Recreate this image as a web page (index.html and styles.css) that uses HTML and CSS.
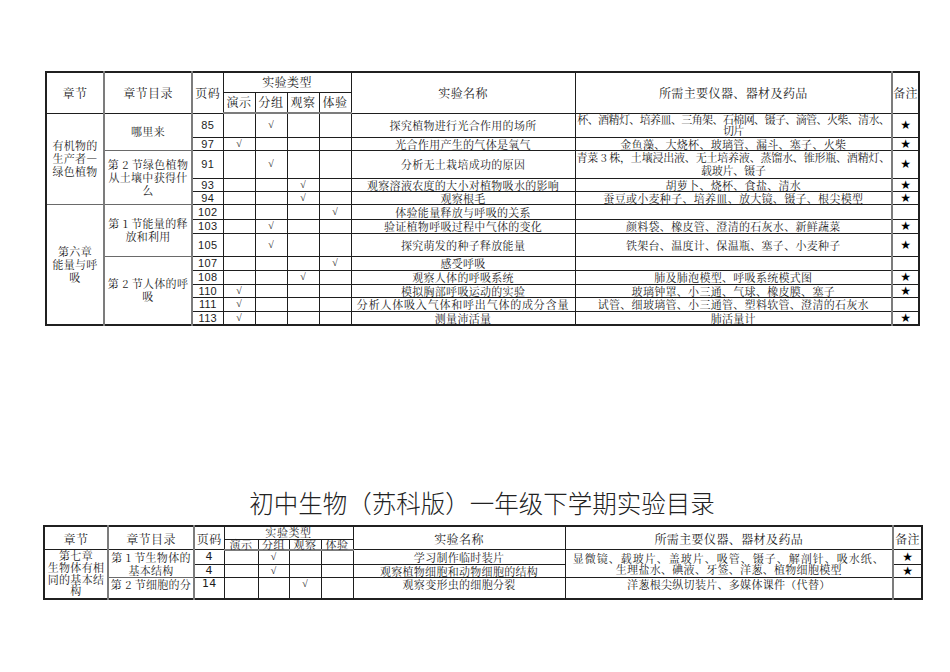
FILE: index.html
```html
<!DOCTYPE html>
<html lang="zh-CN">
<head>
<meta charset="utf-8">
<title>初中生物实验目录</title>
<link rel="stylesheet" href="styles.css">
</head>
<body>
<div class="page">
  <table class="grid t1">
    <colgroup>
      <col class="w58"><col class="w88"><col class="w31"><col class="w32"><col class="w32"><col class="w32"><col class="w32"><col class="w224"><col class="w317"><col class="w27">
    </colgroup>
    <tr class="h20">
      <th rowspan="2" class="gr">章节</th>
      <th rowspan="2" class="gr">章节目录</th>
      <th rowspan="2">页码</th>
      <th colspan="4">实验类型</th>
      <th rowspan="2">实验名称</th>
      <th rowspan="2" class="gr">所需主要仪器、器材及药品</th>
      <th rowspan="2">备注</th>
    </tr>
    <tr class="h21 hb">
      <th>演示</th><th>分组</th><th>观察</th><th>体验</th>
    </tr>
    <tr class="h24">
      <td rowspan="5" class="gr side">有机物的<br>生产者—<br>绿色植物</td>
      <td rowspan="2" class="gr side">哪里来</td>
      <td class="num">85</td><td></td><td class="ck">√</td><td></td><td></td>
      <td>探究植物进行光合作用的场所</td>
      <td class="gr eq tight l2">杯、酒精灯、培养皿、三角架、石棉网、镊子、滴管、火柴、清水、<br>切片</td>
      <td class="star">★</td>
    </tr>
    <tr class="h13">
      <td class="num">97</td><td class="ck">√</td><td></td><td></td><td></td>
      <td>光合作用产生的气体是氧气</td>
      <td class="gr eq">金鱼藻、大烧杯、玻璃管、漏斗、塞子、火柴</td>
      <td class="star">★</td>
    </tr>
    <tr class="h28">
      <td rowspan="3" class="gr side">第 2 节绿色植物<br>从土壤中获得什<br>么</td>
      <td class="num">91</td><td></td><td class="ck">√</td><td></td><td></td>
      <td>分析无土栽培成功的原因</td>
      <td class="gr eq snug l3">青菜 3 株，土壤浸出液、无土培养液、蒸馏水、锥形瓶、酒精灯、<br>载玻片、镊子</td>
      <td class="star">★</td>
    </tr>
    <tr class="h12">
      <td class="num">93</td><td></td><td></td><td class="ck">√</td><td></td>
      <td>观察溶液农度的大小对植物吸水的影响</td>
      <td class="gr eq">胡萝卜、烧杯、食盐、清水</td>
      <td class="star">★</td>
    </tr>
    <tr class="h13">
      <td class="num">94</td><td></td><td></td><td class="ck">√</td><td></td>
      <td>观察根毛</td>
      <td class="gr eq">蚕豆或小麦种子、培养皿、放大镜、镊子、根尖模型</td>
      <td class="star">★</td>
    </tr>
    <tr class="h15">
      <td rowspan="10" class="gr side">第六章<br>能量与呼<br>吸</td>
      <td rowspan="3" class="gr side">第 1 节能量的释<br>放和利用</td>
      <td class="num">102</td><td></td><td></td><td></td><td class="ck">√</td>
      <td>体验能量释放与呼吸的关系</td>
      <td class="gr eq"></td>
      <td></td>
    </tr>
    <tr class="h14">
      <td class="num">103</td><td></td><td class="ck">√</td><td></td><td></td>
      <td>验证植物呼吸过程中气体的变化</td>
      <td class="gr eq">颜料袋、橡皮管、澄清的石灰水、新鲜蔬菜</td>
      <td class="star">★</td>
    </tr>
    <tr class="h23">
      <td class="num">105</td><td></td><td class="ck">√</td><td></td><td></td>
      <td>探究萌发的种子释放能量</td>
      <td class="gr eq">铁架台、温度计、保温瓶、塞子、小麦种子</td>
      <td class="star">★</td>
    </tr>
    <tr class="h14">
      <td rowspan="5" class="gr side">第 2 节人体的呼<br>吸</td>
      <td class="num">107</td><td></td><td></td><td></td><td class="ck">√</td>
      <td>感受呼吸</td>
      <td class="gr eq"></td>
      <td></td>
    </tr>
    <tr class="h14">
      <td class="num">108</td><td></td><td></td><td class="ck">√</td><td></td>
      <td>观察人体的呼吸系统</td>
      <td class="gr eq">肺及肺泡模型、呼吸系统模式图</td>
      <td class="star">★</td>
    </tr>
    <tr class="h13">
      <td class="num">110</td><td class="ck">√</td><td></td><td></td><td></td>
      <td>模拟胸部呼吸运动的实验</td>
      <td class="gr eq">玻璃钟罩、小三通、气球、橡皮膜、塞子</td>
      <td class="star">★</td>
    </tr>
    <tr class="h14">
      <td class="num">111</td><td class="ck">√</td><td></td><td></td><td></td>
      <td class="wide">分析人体吸入气体和呼出气体的成分含量</td>
      <td class="gr eq">试管、细玻璃管、小三通管、塑料软管、澄清的石灰水</td>
      <td></td>
    </tr>
    <tr class="h14">
      <td class="num">113</td><td class="ck">√</td><td></td><td></td><td></td>
      <td>测量沛活量</td>
      <td class="gr eq">肺活量计</td>
      <td class="star">★</td>
    </tr>
  </table>

  <div class="sheet2">
    <h1 class="title">初中生物（苏科版）一年级下学期实验目录</h1>
    <table class="grid t2">
      <colgroup>
        <col class="w64"><col class="w86"><col class="w30"><col class="w34"><col class="w31"><col class="w32"><col class="w32"><col class="w212"><col class="w328"><col class="w29">
      </colgroup>
      <tr class="h13">
        <th rowspan="2" class="gr">章节</th>
        <th rowspan="2" class="gr">章节目录</th>
        <th rowspan="2">页码</th>
        <th colspan="4" class="short">实验类型</th>
        <th rowspan="2">实验名称</th>
        <th rowspan="2" class="gr">所需主要仪器、器材及药品</th>
        <th rowspan="2">备注</th>
      </tr>
      <tr class="h10 hb">
        <th class="short">演示</th><th class="short">分组</th><th class="short">观察</th><th class="short">体验</th>
      </tr>
      <tr class="h15">
        <td rowspan="3" class="gr side top ch7">第七章<br>生物体有相<br>同的基本结<br>构</td>
        <td rowspan="2" class="gr side">第 1 节生物体的<br>基本结构</td>
        <td class="num b">4</td><td></td><td class="ck">√</td><td></td><td></td>
        <td>学习制作临时装片</td>
        <td rowspan="2" class="gr eq l1"><span class="ls10">显微镜、载玻片、盖玻片、吸管、镊子、解剖针、吸水纸、</span><br><span class="ls03">生理盐水、碘液、牙签、洋葱、植物细胞模型</span></td>
        <td class="star">★</td>
      </tr>
      <tr class="h13">
        <td class="num b">4</td><td></td><td class="ck">√</td><td></td><td></td>
        <td>观察植物细胞和动物细胞的结构</td>
        <td class="star">★</td>
      </tr>
      <tr class="h21 top">
        <td class="gr side">第 2 节细胞的分</td>
        <td class="num b">14</td><td></td><td></td><td class="ck">√</td><td></td>
        <td>观察变形虫的细胞分裂</td>
        <td class="gr eq">洋葱根尖纵切装片、多媒体课件（代替）</td>
        <td></td>
      </tr>
    </table>
  </div>
</div>
</body>
</html>
```

FILE: styles.css
```css
html, body {
  margin: 0;
  padding: 0;
  background: #ffffff;
}

body {
  font-family: "Noto Serif CJK SC", "Noto Sans CJK SC", "Liberation Serif", serif;
  color: #1c1c1c;
}

.page {
  padding-top: 71px;
}

.grid {
  border-collapse: collapse;
  table-layout: fixed;
  border: 2px solid #202020;
  font-size: 11px;
  line-height: 12px;
}

.grid th,
.grid td {
  padding: 0;
  border: 1px solid #1e1e1e;
  text-align: center;
  vertical-align: middle;
  white-space: nowrap;
  overflow: visible;
  font-weight: normal;
  letter-spacing: 0.3px;
}

.grid th {
  font-size: 12px;
  letter-spacing: 0.4px;
}

.t1 {
  margin-left: 45px;
  width: 873px;
}

.sheet2 {
  margin-left: 43px;
  width: 878px;
}

.title {
  margin: 162px 0 7px 0;
  height: 30px;
  font-size: 24.5px;
  line-height: 30px;
  font-weight: 300;
  text-align: center;
  letter-spacing: 0;
  font-family: "Noto Sans CJK SC", sans-serif;
  color: #222222;
}

.t2 {
  width: 878px;
}

.t2 th {
  line-height: 11px;
}

.grid.t2 th.short {
  font-size: 11px;
  line-height: 9px;
  letter-spacing: 0.6px;
}

/* column widths */
.w27 { width: 27px; }
.w29 { width: 29px; }
.w30 { width: 30px; }
.w31 { width: 31px; }
.w32 { width: 32px; }
.w34 { width: 34px; }
.w58 { width: 58px; }
.w64 { width: 64px; }
.w86 { width: 86px; }
.w88 { width: 88px; }
.w212 { width: 212px; }
.w224 { width: 224px; }
.w317 { width: 317px; }
.w328 { width: 328px; }

/* row heights */
.h10 { height: 10px; }
.h11 { height: 11px; }
.h12 { height: 12px; }
.h13 { height: 13px; }
.h14 { height: 14px; }
.h15 { height: 15px; }
.h20 { height: 20px; }
.h21 { height: 21px; }
.h23 { height: 23px; }
.h24 { height: 24px; }
.h28 { height: 28px; }

/* grey heavier rules */
.grid .gr {
  border-right: 2px solid #7c7c7c;
}

.grid .hb th {
  border-bottom: 2px solid #7c7c7c;
}

.grid .side {
  line-height: 13px;
  border-bottom-color: #6a6a6a;
}

.grid .top,
.grid .top td {
  vertical-align: top;
}

.t2 .side.ch7 {
  line-height: 11.8px;
}

.num {
  font-family: "Liberation Sans", "DejaVu Sans", sans-serif;
  letter-spacing: 0;
}

.num.b {
  font-family: "DejaVu Sans", sans-serif;
  font-size: 11px;
}

.grid .ck {
  font-family: "Liberation Serif", "DejaVu Serif", serif;
  font-size: 10px;
  letter-spacing: 0;
}

.grid .star {
  font-family: "DejaVu Sans", sans-serif;
  font-size: 12px;
  letter-spacing: 0;
  color: #000000;
}

.grid .tight {
  letter-spacing: -0.6px;
}

.grid .snug {
  letter-spacing: -0.2px;
}

.ls10 {
  letter-spacing: 1px;
}

.ls03 {
  letter-spacing: 0.3px;
}

.grid .wide {
  letter-spacing: 0.8px;
}

.l1 { line-height: 11px; }
.l2 { line-height: 11px; }
.l3 { line-height: 13px; }
```
